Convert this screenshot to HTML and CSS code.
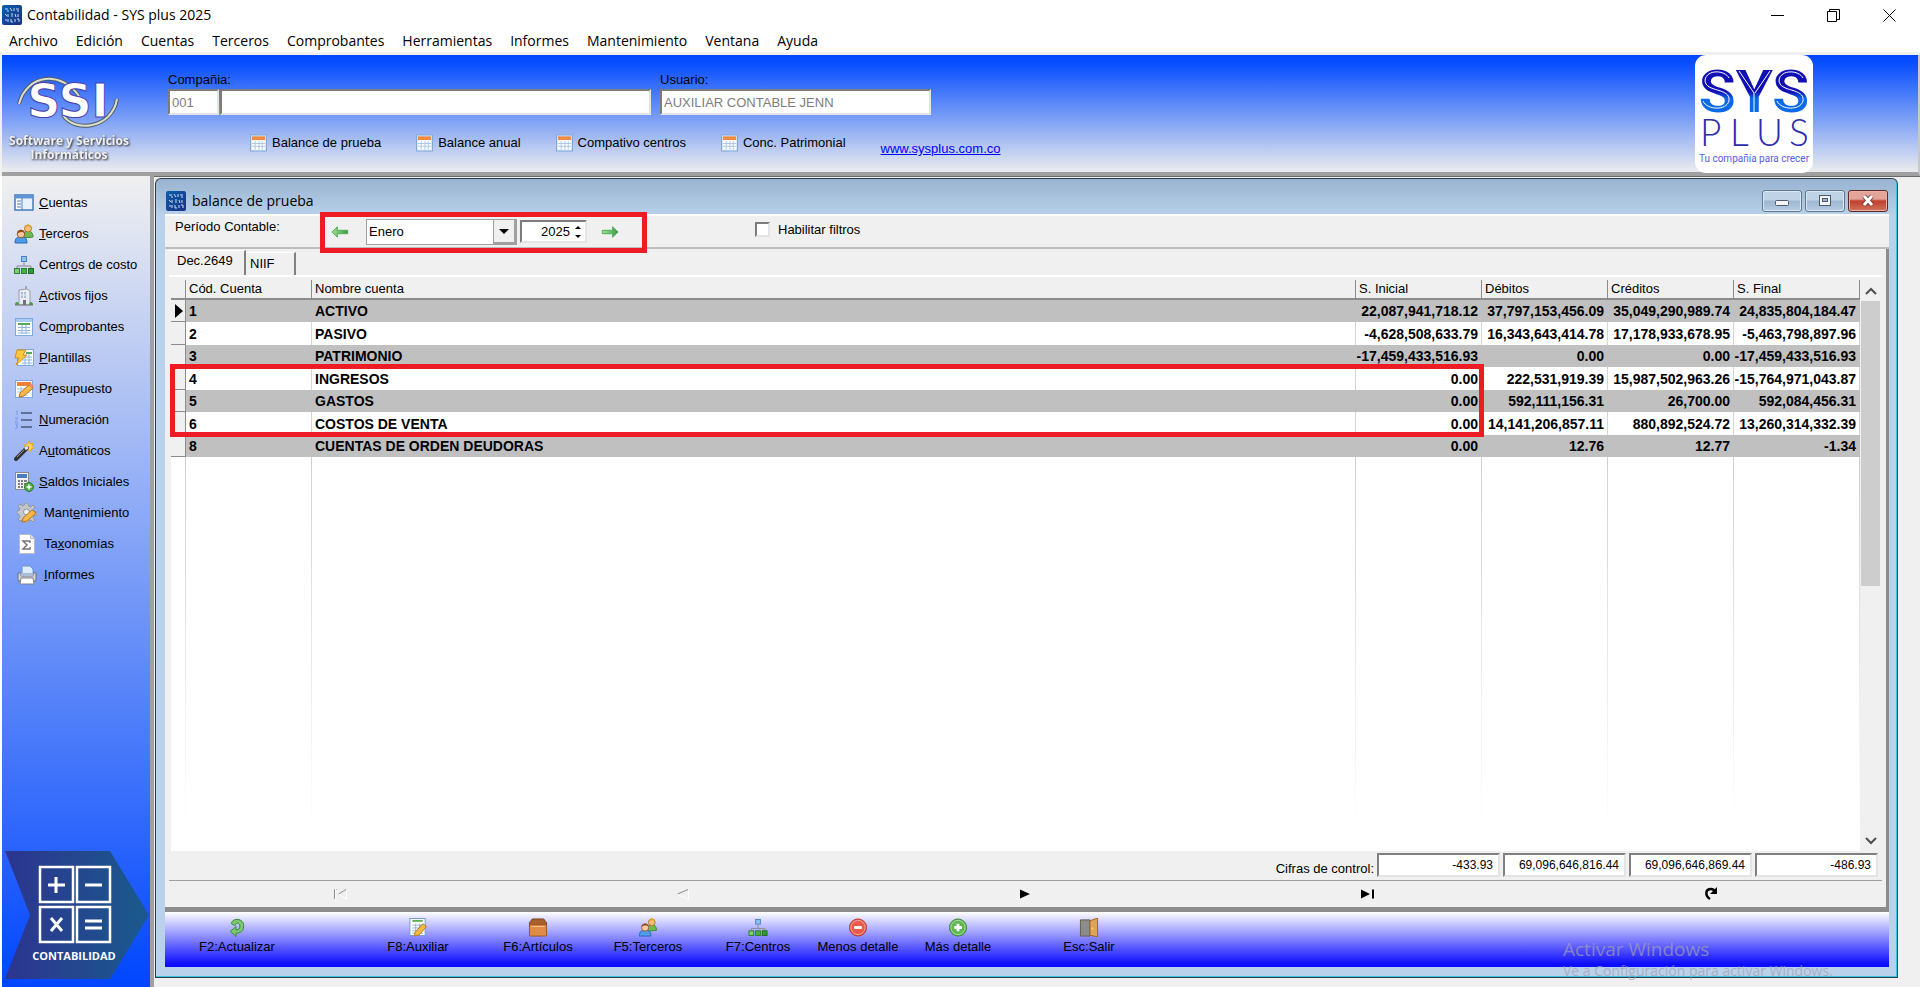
FILE: index.html
```html
<!DOCTYPE html>
<html lang="es">
<head>
  <meta charset="UTF-8">
  <meta name="viewport" content="width=device-width, initial-scale=1.0">
  <title>Contabilidad - SYS plus 2025</title>
  <link rel="stylesheet" href="styles.css">
</head>
<body>
  <!-- iconos -->
  <svg class="sprite" aria-hidden="true">
    <defs>
      <linearGradient id="gApp" x1="0" y1="0" x2="1" y2="1">
        <stop offset="0" stop-color="#0a5fa8"/><stop offset="1" stop-color="#1c2f86"/>
      </linearGradient>
      <linearGradient id="gGreen" x1="0" y1="0" x2="1" y2="0">
        <stop offset="0" stop-color="#9be08f"/><stop offset="1" stop-color="#3c9a42"/>
      </linearGradient>
      <linearGradient id="gBadge" x1="0" y1="0" x2="1" y2="0">
        <stop offset="0" stop-color="#2d3490"/><stop offset="1" stop-color="#1a5a8c"/>
      </linearGradient>
      <linearGradient id="gSys" x1="0" y1="0" x2="0" y2="1">
        <stop offset="0.5" stop-color="#1010b4"/><stop offset="0.6" stop-color="#0a6ae6"/>
      </linearGradient>
    </defs>
    <symbol id="i-app" viewBox="0 0 20 20">
      <rect width="20" height="20" rx="2" fill="url(#gApp)"/>
      <path d="M3 4h3M5 6h2M8 3l2 3M12 3v3M14 4h3M15 6h2M3 9l2 2M6 9v3M9 9h2M9 11h2M13 9l1 3M16 9v3M3 15h2M6 14v3M9 14v3h2M13 14v3M15 14h2v3" stroke="#c6dcf4" stroke-width="1" fill="none"/>
    </symbol>
    <symbol id="i-cal" viewBox="0 0 18 18">
      <rect x="0.5" y="0.5" width="17" height="17" fill="#d5e6f8" stroke="#7fa6d6"/>
      <rect x="2" y="2" width="14" height="4" fill="#f28a42"/>
      <rect x="2" y="6" width="14" height="10" fill="#fff"/>
      <path d="M2 9.500h14M2 12.500h14M5.500 7v9M9.500 7v9M13 7v9" stroke="#a9c4e6" stroke-width="1"/>
    </symbol>
    <symbol id="i-panel" viewBox="0 0 20 20">
      <rect x="1" y="2" width="18" height="15" fill="#fff" stroke="#3f78bd" stroke-width="1.500"/>
      <path d="M1 4h18" stroke="#5a93d6" stroke-width="3"/>
      <path d="M8 5v12" stroke="#3f78bd"/>
      <path d="M3 8h4M3 11h4M3 14h4" stroke="#4d7fbf"/>
      <path d="M9 6h9v10H9z" fill="#e6f1fc"/>
    </symbol>
    <symbol id="i-users" viewBox="0 0 20 20">
      <path d="M9 14c0-5 2-7 5-7s5 2 5 6z" fill="#6fb94f" stroke="#3f8a30"/>
      <circle cx="14" cy="4.500" r="3.500" fill="#f2c078" stroke="#b37a28"/>
      <path d="M10.500 3.500c1-4 6-4 7-.5-2-1-4-1-7 .5z" fill="#e0a020"/>
      <path d="M1 19c0-5 2-6 6-6s6 1 6 6z" fill="#4e9bea" stroke="#2867b0"/>
      <circle cx="7" cy="10" r="3.800" fill="#f4c8a0" stroke="#9a5a2a"/>
      <path d="M3.200 9.500c0-5 7.500-5 7.600 0-2-2-5-2-7.600 0z" fill="#9a4a1c"/>
    </symbol>
    <symbol id="i-tree" viewBox="0 0 20 20">
      <rect x="7.500" y="1.500" width="5" height="5" fill="#8fc0f4" stroke="#4a84c6"/>
      <path d="M10 7v4M3 13v-2h14v2" stroke="#8a8a8a" fill="none"/>
      <rect x="0.500" y="13.500" width="5" height="5" fill="#7fd06a" stroke="#2d8030"/>
      <rect x="7.500" y="13.500" width="5" height="5" fill="#48b048" stroke="#2d8030"/>
      <rect x="14.500" y="13.500" width="5" height="5" fill="#2f9a38" stroke="#1f6a24"/>
    </symbol>
    <symbol id="i-building" viewBox="0 0 20 20">
      <path d="M12 0v4" stroke="#777"/>
      <path d="M5 4l8-1 3 2v14H5z" fill="#e9ecf1" stroke="#9a9fa8"/>
      <path d="M7 6h5v6H7z" fill="#a9bcd8"/>
      <path d="M9.500 6v6M7 9h5M14 7v7" stroke="#e9ecf1"/>
      <path d="M9 14h3v5H9z" fill="#6b7280"/>
      <path d="M1 19c0-4 4-4 4 0zM15 19c0-4 4-4 4 0z" fill="#4d9a46"/>
      <path d="M1 19h18" stroke="#7a7a7a"/>
    </symbol>
    <symbol id="i-sheet" viewBox="0 0 20 20">
      <rect x="1.500" y="1.500" width="17" height="17" fill="#fff" stroke="#7fa9dc"/>
      <path d="M2 3.500h16" stroke="#a9cdf2" stroke-width="3"/>
      <path d="M4 7h12" stroke="#58a85c" stroke-width="2"/>
      <path d="M4 10.500h12M4 13.500h12M4 16h12M8 8v9M12 8v9" stroke="#8fb4de"/>
    </symbol>
    <symbol id="i-bolt" viewBox="0 0 20 20">
      <rect x="3.500" y="1.500" width="16" height="16" fill="#fff" stroke="#7fa9dc"/>
      <path d="M12 5h6" stroke="#58a85c" stroke-width="2"/>
      <path d="M8 9h10M8 12h10M8 15h10M11 8v9M15 6v11" stroke="#8fb4de"/>
      <path d="M3 2h9l-3 5h4L2 17l3-7H1z" fill="#fbc640" stroke="#d18f1c"/>
    </symbol>
    <symbol id="i-budget" viewBox="0 0 20 20">
      <rect x="1.500" y="1.500" width="17" height="17" fill="#fff" stroke="#7fa9dc"/>
      <rect x="3" y="3" width="14" height="4" fill="#f08038"/>
      <path d="M3 10h13M3 13h13M7 8v9M12 8v9" stroke="#9fc0e6"/>
      <path d="M5 18l1-4 9-8 4 3-9 8z" fill="#f8b848" stroke="#b8741c"/>
      <path d="M15 6l4 3 1-2-3-3z" fill="#ec8a7a"/>
    </symbol>
    <symbol id="i-list" viewBox="0 0 20 20">
      <path d="M7 3h11M7 10h11M7 17h11" stroke="#4a5a78" stroke-width="1.500"/>
      <path d="M2 2l1-1v4M1 8h3l-3 4h3M1 14h3l-2 2 2 1-3 2" stroke="#7d9be8" fill="none"/>
    </symbol>
    <symbol id="i-wand" viewBox="0 0 20 20">
      <path d="M15 0l1 3 3-1-1 3 2 2-3 1v3l-3-2-3 1 1-3-2-3 3 0z" fill="#fcd45a" stroke="#e6a82a"/>
      <path d="M2 18L13 7" stroke="#333" stroke-width="4" stroke-linecap="round"/>
      <path d="M11 8l3-2" stroke="#e4e4e4" stroke-width="3"/>
      <path d="M3 16l7-7" stroke="#999"/>
    </symbol>
    <symbol id="i-calc" viewBox="0 0 20 20">
      <rect x="1.500" y="0.500" width="13" height="17" fill="#f0f0ee" stroke="#8a8a8a"/>
      <rect x="3" y="2" width="10" height="4" fill="#4d7cc0"/>
      <path d="M4 9h2M7 9h2M10 9h3M4 12h2M7 12h2M10 12h2M4 15h2M7 15h2" stroke="#7d7d86" stroke-width="2"/>
      <circle cx="15" cy="15" r="4.500" fill="#4fae48" stroke="#2f7d2e"/>
      <path d="M12.500 15h5M15 12.500v5" stroke="#fff" stroke-width="1.500"/>
    </symbol>
    <symbol id="i-gear" viewBox="0 0 20 20">
      <path d="M8 0h3l.5 3 2 1 2.500-2 2 2-2 2.500 1 2 3 .5v3l-3 .5-1 2 2 2.500-2 2-2.500-2-2 1-.5 2H8l-.5-2-2-1L3 18l-2-2 2-2.500-1-2L0 11V8l2-.5 1-2L1 3l2-2 2.500 2 2-1z" fill="#c3c6cc" stroke="#8f939b"/>
      <circle cx="9.500" cy="9" r="3" fill="#eef1f8" stroke="#8f939b"/>
      <path d="M5 19l1-4 9-8 4 3-9 8z" fill="#f8b848" stroke="#b8741c"/>
    </symbol>
    <symbol id="i-sigma" viewBox="0 0 20 20">
      <path d="M2.500 0.500h11l4 4v15h-15z" fill="#fff" stroke="#b5bccb"/>
      <path d="M13.500 0.500v4h4" fill="#dde3ee" stroke="#b5bccb"/>
      <path d="M13 9V7H6l4 4-4 4h7v-2" fill="none" stroke="#777" stroke-width="1.500"/>
    </symbol>
    <symbol id="i-printer" viewBox="0 0 20 20">
      <path d="M5 9V1h8l3 3v5z" fill="#dcecfb" stroke="#6b94c6"/>
      <path d="M1 8h3v3h12V8h3v8H1z" fill="#d2d4d8" stroke="#6f737b"/>
      <path d="M4 8h12v3H4z" fill="#a9bdd6"/>
      <path d="M4 13h12l1 6H3z" fill="#fff" stroke="#7d828a"/>
    </symbol>
    <symbol id="i-left" viewBox="0 0 20 14">
      <path d="M0.500 7L7 1v4h12v4H7v4z" fill="url(#gGreen)" stroke="#4aa850"/>
    </symbol>
    <symbol id="i-right" viewBox="0 0 20 14">
      <path d="M19.500 7L13 1v4H1v4h12v4z" fill="url(#gGreen)" stroke="#4aa850"/>
    </symbol>
    <symbol id="i-refresh" viewBox="0 0 20 20">
      <path d="M4 6C5-1 18 0 17 9c0 5-4 7-8 7v3.500L3 14l6-5v3.500c3 0 4-1 4-4C13 5 9 4 8 8z" fill="#7cc870" stroke="#348a34"/>
    </symbol>
    <symbol id="i-edit" viewBox="0 0 20 20">
      <rect x="1.500" y="0.500" width="16" height="18" fill="#fff" stroke="#6e9bd4"/>
      <path d="M4 3h11" stroke="#5cb050" stroke-width="2"/>
      <path d="M4 7.500h11M4 10.500h11M4 13.500h11M4 16h11M7.500 6v11M11.500 6v11" stroke="#8fb4de"/>
      <path d="M6 19l1-4 8-9 4 3-8 9z" fill="#f8b848" stroke="#b8741c"/>
    </symbol>
    <symbol id="i-box" viewBox="0 0 20 20">
      <path d="M1 5l3-4h12l3 4v3H1z" fill="#a8602c" stroke="#7c4218"/>
      <rect x="1" y="7" width="18" height="12" rx="1" fill="#e08a48" stroke="#9a5420"/>
      <path d="M3 9h14" stroke="#f6c08c"/>
    </symbol>
    <symbol id="i-minus" viewBox="0 0 20 20">
      <circle cx="10" cy="10" r="9" fill="#ea5a4c" stroke="#b83228"/>
      <circle cx="10" cy="10" r="7.500" fill="none" stroke="#f6a79c"/>
      <path d="M6 10h8" stroke="#fff" stroke-width="3"/>
    </symbol>
    <symbol id="i-plus" viewBox="0 0 20 20">
      <circle cx="10" cy="10" r="9" fill="#5fb653" stroke="#36852f"/>
      <circle cx="10" cy="10" r="7.500" fill="none" stroke="#aadf9e"/>
      <path d="M6 10h8M10 6v8" stroke="#fff" stroke-width="3"/>
    </symbol>
    <symbol id="i-door" viewBox="0 0 20 20">
      <path d="M1 19V2h10v17z" fill="#8c8c8c" stroke="#6a5a48"/>
      <path d="M11 3l8-3v20l-8-2z" fill="#e0a458" stroke="#9c6420"/>
      <circle cx="13.500" cy="11" r="1" fill="#ffd94a"/>
    </symbol>
  </svg>

  <header class="titlebar">
    <svg class="app-icon"><use href="#i-app"/></svg>
    <h1 class="app-title">Contabilidad - SYS plus 2025</h1>
    <div class="win-controls">
      <button class="win-btn" aria-label="Minimizar"><svg width="13" height="13"><path d="M0 6.500h13" stroke="#000"/></svg></button>
      <button class="win-btn" aria-label="Restaurar"><svg width="13" height="13"><path d="M0.500 2.500h9v10h-9zM2.500 2.500v-2h10v10h-3" fill="none" stroke="#000"/></svg></button>
      <button class="win-btn" aria-label="Cerrar"><svg width="13" height="13"><path d="M0.500 0.500l12 12M12.500 0.500l-12 12" stroke="#000"/></svg></button>
    </div>
  </header>

  <nav class="menubar">
    <button class="menu-item">Archivo</button>
    <button class="menu-item">Edición</button>
    <button class="menu-item">Cuentas</button>
    <button class="menu-item">Terceros</button>
    <button class="menu-item">Comprobantes</button>
    <button class="menu-item">Herramientas</button>
    <button class="menu-item">Informes</button>
    <button class="menu-item">Mantenimiento</button>
    <button class="menu-item">Ventana</button>
    <button class="menu-item">Ayuda</button>
  </nav>

  <div class="banner">
    <svg class="ssi-logo" viewBox="0 0 150 117">
      <g fill="none" stroke="#4c5a6a" stroke-width="4">
        <path d="M17 49C25 18 60 16 77 41"/><path d="M115 44C110 74 72 78 61 60"/>
      </g>
      <g fill="none" stroke="#d9dfc8" stroke-width="2">
        <path d="M17 49C25 18 60 16 77 41"/><path d="M115 44C110 74 72 78 61 60"/>
      </g>
      <text class="ssi-word" x="66" y="62" text-anchor="middle">SSI</text>
      <text class="ssi-caption" x="67" y="90" text-anchor="middle">Software y Servicios</text>
      <text class="ssi-caption" x="67" y="104" text-anchor="middle">Informáticos</text>
    </svg>
    <div class="banner-main">
      <div class="fields">
        <div class="field">
          <label for="companyCode">Compañia:</label>
          <div class="field-pair">
            <input id="companyCode" class="box box-code" type="text" value="001" readonly>
            <input class="box box-name" type="text" value="" aria-label="Nombre de la compañía" readonly>
          </div>
        </div>
        <div class="field">
          <label for="userName">Usuario:</label>
          <input id="userName" class="box box-user" type="text" value="AUXILIAR CONTABLE JENN" readonly>
        </div>
      </div>
      <div class="shortcuts">
        <button class="shortcut"><svg><use href="#i-cal"/></svg>Balance de prueba</button>
        <button class="shortcut"><svg><use href="#i-cal"/></svg>Balance anual</button>
        <button class="shortcut"><svg><use href="#i-cal"/></svg>Compativo centros</button>
        <button class="shortcut"><svg><use href="#i-cal"/></svg>Conc. Patrimonial</button>
        <a class="site-link" href="#">www.sysplus.com.co</a>
      </div>
    </div>
    <svg class="sys-logo" viewBox="0 0 118 118">
      <rect width="118" height="118" rx="11" fill="#fff"/>
      <text class="sys-word" x="59" y="57" text-anchor="middle">SYS</text>
      <!-- vetas blancas de las letras -->
      <g fill="none" stroke="#fff" stroke-width="1">
        <path d="M34 23C30 15 12 14 10 25C10 38 36 32 34 46C31 56 12 55 8 46"/>
        <path d="M44 16L59 38V57M75 16L60 38"/>
        <path d="M108 23C104 15 86 14 84 25C84 38 110 32 108 46C105 56 86 55 82 46"/>
      </g>
      <text class="plus-word" x="5" y="91">P</text>
      <text class="plus-word" x="35" y="91">L</text>
      <text class="plus-word" x="61" y="91">U</text>
      <text class="plus-word" x="94" y="91">S</text>
      <text class="sys-caption" x="59" y="107" text-anchor="middle">Tu compañía para crecer</text>
    </svg>
  </div>

  <div class="workspace">
    <aside class="sidebar">
      <button class="side-item"><svg><use href="#i-panel"/></svg><span><u>C</u>uentas</span></button>
      <button class="side-item"><svg><use href="#i-users"/></svg><span><u>T</u>erceros</span></button>
      <button class="side-item"><svg><use href="#i-tree"/></svg><span>Centr<u>o</u>s de costo</span></button>
      <button class="side-item"><svg><use href="#i-building"/></svg><span><u>A</u>ctivos fijos</span></button>
      <button class="side-item"><svg><use href="#i-sheet"/></svg><span>Co<u>m</u>probantes</span></button>
      <button class="side-item"><svg><use href="#i-bolt"/></svg><span><u>P</u>lantillas</span></button>
      <button class="side-item"><svg><use href="#i-budget"/></svg><span>P<u>r</u>esupuesto</span></button>
      <button class="side-item"><svg><use href="#i-list"/></svg><span><u>N</u>umeración</span></button>
      <button class="side-item"><svg><use href="#i-wand"/></svg><span>A<u>u</u>tomáticos</span></button>
      <button class="side-item"><svg><use href="#i-calc"/></svg><span><u>S</u>aldos Iniciales</span></button>
      <button class="side-item side-wide"><svg><use href="#i-gear"/></svg><span>Mant<u>e</u>nimiento</span></button>
      <button class="side-item side-wide"><svg><use href="#i-sigma"/></svg><span>Ta<u>x</u>onomías</span></button>
      <button class="side-item side-wide"><svg><use href="#i-printer"/></svg><span><u>I</u>nformes</span></button>
      <svg class="badge" viewBox="0 0 144 128">
        <path d="M0 0H105L144 64L105 128H0L25 64Z" fill="url(#gBadge)"/>
        <g fill="none" stroke="#fff" stroke-width="2.500">
          <rect x="35" y="16" width="33" height="35"/><rect x="72" y="16" width="33" height="35"/>
          <rect x="35" y="56" width="33" height="35"/><rect x="72" y="56" width="33" height="35"/>
        </g>
        <path d="M43 34h17M51 26v16M80 34h17M46 67l11 13M57 67l-11 13M80 70h17M80 77h17" stroke="#fff" stroke-width="3"/>
        <text class="badge-text" x="69" y="109" text-anchor="middle">CONTABILIDAD</text>
      </svg>
    </aside>

    <main class="mdi">
      <section class="child">
        <div class="child-title">
          <svg class="child-icon"><use href="#i-app"/></svg>
          <h2>balance de prueba</h2>
          <div class="child-controls">
            <button class="cap-btn" aria-label="Minimizar"><svg width="16" height="14"><rect x="1.500" y="6.500" width="13" height="5" rx="1" fill="#f4f4f4" stroke="#4c5b6d"/></svg></button>
            <button class="cap-btn" aria-label="Maximizar"><svg width="16" height="14"><rect x="2.500" y="1.500" width="11" height="10" fill="#f4f4f4" stroke="#4c5b6d"/><rect x="5.500" y="4.500" width="5" height="3" fill="#9db4cc" stroke="#4c5b6d"/></svg></button>
            <button class="cap-btn cap-close" aria-label="Cerrar"><svg width="16" height="14"><path d="M4 2l8 9M12 2l-8 9" stroke="#5c3030" stroke-width="4.500"/><path d="M4 2l8 9M12 2l-8 9" stroke="#fff" stroke-width="3"/></svg></button>
          </div>
        </div>

        <div class="child-body">
          <div class="toolbar">
            <span class="toolbar-label">Período Contable:</span>
            <div class="period">
              <button class="arrow-btn" aria-label="Mes anterior"><svg width="18" height="12"><use href="#i-left"/></svg></button>
              <div class="combo">
                <select class="combo-select" aria-label="Mes">
                  <option>Enero</option>
                  <option>Febrero</option>
                  <option>Marzo</option>
                </select>
                <span class="combo-arrow"></span>
              </div>
              <div class="spin">
                <input class="spin-input" type="number" value="2025" aria-label="Año">
                <span class="spin-arrows"><i class="tri-up"></i><i class="tri-down"></i></span>
              </div>
              <button class="arrow-btn" aria-label="Mes siguiente"><svg width="18" height="12"><use href="#i-right"/></svg></button>
              <div class="mark mark-period"></div>
            </div>
            <label class="filter"><input class="check" type="checkbox">Habilitar filtros</label>
          </div>

          <div class="sheet">
            <div class="tabs" role="tablist">
              <button class="tab tab-active" role="tab" aria-selected="true">Dec.2649</button>
              <button class="tab" role="tab" aria-selected="false">NIIF</button>
            </div>

            <div class="grid-wrap">
              <table class="grid">
                <colgroup>
                  <col class="col-ind"><col class="col-code"><col>
                  <col class="col-num"><col class="col-num"><col class="col-num"><col class="col-num">
                </colgroup>
                <thead>
                  <tr><th></th><th>Cód. Cuenta</th><th>Nombre cuenta</th><th>S. Inicial</th><th>Débitos</th><th>Créditos</th><th>S. Final</th></tr>
                </thead>
                <tbody>
                  <tr><td class="ind"><i class="current"></i></td><td>1</td><td>ACTIVO</td><td class="num">22,087,941,718.12</td><td class="num">37,797,153,456.09</td><td class="num">35,049,290,989.74</td><td class="num">24,835,804,184.47</td></tr>
                  <tr><td class="ind"></td><td>2</td><td>PASIVO</td><td class="num">-4,628,508,633.79</td><td class="num">16,343,643,414.78</td><td class="num">17,178,933,678.95</td><td class="num">-5,463,798,897.96</td></tr>
                  <tr><td class="ind"></td><td>3</td><td>PATRIMONIO</td><td class="num">-17,459,433,516.93</td><td class="num">0.00</td><td class="num">0.00</td><td class="num">-17,459,433,516.93</td></tr>
                  <tr><td class="ind"></td><td>4</td><td>INGRESOS</td><td class="num">0.00</td><td class="num">222,531,919.39</td><td class="num">15,987,502,963.26</td><td class="num">-15,764,971,043.87</td></tr>
                  <tr><td class="ind"></td><td>5</td><td>GASTOS</td><td class="num">0.00</td><td class="num">592,111,156.31</td><td class="num">26,700.00</td><td class="num">592,084,456.31</td></tr>
                  <tr><td class="ind"></td><td>6</td><td>COSTOS DE VENTA</td><td class="num">0.00</td><td class="num">14,141,206,857.11</td><td class="num">880,892,524.72</td><td class="num">13,260,314,332.39</td></tr>
                  <tr><td class="ind"></td><td>8</td><td>CUENTAS DE ORDEN DEUDORAS</td><td class="num">0.00</td><td class="num">12.76</td><td class="num">12.77</td><td class="num">-1.34</td></tr>
                  <tr class="filler"><td></td><td></td><td></td><td></td><td></td><td></td><td></td></tr>
                </tbody>
              </table>
              <div class="scrollbar">
                <svg width="12" height="9"><path d="M1 7l5-5 5 5" fill="none" stroke="#505050" stroke-width="2"/></svg>
                <div class="thumb"></div>
                <svg width="12" height="9"><path d="M1 2l5 5 5-5" fill="none" stroke="#505050" stroke-width="2"/></svg>
              </div>
              <div class="mark mark-rows"></div>
            </div>

            <div class="totals">
              <label for="ctl1">Cifras de control:</label>
              <input id="ctl1" class="total" type="text" value="-433.93" readonly>
              <input class="total" type="text" value="69,096,646,816.44" aria-label="Débitos" readonly>
              <input class="total" type="text" value="69,096,646,869.44" aria-label="Créditos" readonly>
              <input class="total" type="text" value="-486.93" aria-label="Saldo final" readonly>
            </div>

            <div class="navigator">
              <button class="nav-btn" aria-label="Primero" disabled><svg width="16" height="12"><path d="M2.500 11V1.500h2M14 1.500L6.500 6" stroke="#8c8c8c" fill="none"/><path d="M3.500 1v10.500M7 6.500l7.500 4.500V2" stroke="#fff" fill="none"/></svg></button>
              <button class="nav-btn" aria-label="Anterior" disabled><svg width="14" height="12"><path d="M12 1.500L1.500 6" stroke="#8c8c8c" fill="none"/><path d="M1.500 6.500l11 5V1.500" stroke="#fff" fill="none"/></svg></button>
              <button class="nav-btn" aria-label="Siguiente"><svg width="11" height="10"><path d="M0 0.500v9L10 5z"/></svg></button>
              <button class="nav-btn" aria-label="Último"><svg width="14" height="10"><path d="M0 0.500v9L9 5zM11 0.500h2v9h-2z"/></svg></button>
              <button class="nav-btn" aria-label="Refrescar"><svg width="14" height="14"><path d="M6 12C1 9 1 2 7 2c2 0 3 1 4 2" fill="none" stroke="#000" stroke-width="2.500"/><path d="M13 0v7H6z"/></svg></button>
            </div>
          </div>

          <div class="footer">
            <button class="foot-btn foot-refresh"><svg><use href="#i-refresh"/></svg>F2:Actualizar</button>
            <button class="foot-btn foot-aux"><svg><use href="#i-edit"/></svg>F8:Auxiliar</button>
            <button class="foot-btn"><svg><use href="#i-box"/></svg>F6:Artículos</button>
            <button class="foot-btn"><svg><use href="#i-users"/></svg>F5:Terceros</button>
            <button class="foot-btn"><svg><use href="#i-tree"/></svg>F7:Centros</button>
            <button class="foot-btn foot-less"><svg><use href="#i-minus"/></svg>Menos detalle</button>
            <button class="foot-btn"><svg><use href="#i-plus"/></svg>Más detalle</button>
            <button class="foot-btn foot-exit"><svg><use href="#i-door"/></svg>Esc:Salir</button>
          </div>
        </div>
      </section>
    </main>
  </div>

  <div class="watermark">
    <p class="wm-title">Activar Windows</p>
    <p class="wm-text">Ve a Configuración para activar Windows.</p>
  </div>
</body>
</html>
```
FILE: styles.css
```css
* {
  box-sizing: border-box;
}
body {
  margin: 0;
  height: 100vh;
  display: flex;
  flex-direction: column;
  overflow: hidden;
  position: relative;
  background-color: #f0f0f0;
  font-family: "Liberation Sans", Arial, sans-serif;
  font-size: 13px;
  line-height: 16px;
  color: #000;
}
button, input, select {
  font: inherit;
  color: inherit;
}
button {
  background: none;
  border: none;
  padding: 0;
  white-space: nowrap;
}
h1, h2, p {
  margin: 0;
  font-weight: normal;
}
.sprite {
  position: absolute;
  width: 0;
  height: 0;
}

/* barra de titulo y menu */
.titlebar {
  display: flex;
  align-items: center;
  height: 30px;
  padding-left: 2px;
  background-color: #fff;
  font-family: "Open Sans", "Noto Sans", sans-serif;
}
.app-icon {
  width: 20px;
  height: 20px;
  margin-right: 5px;
}
.app-title {
  font-size: 14px;
}
.win-controls {
  display: flex;
  margin-left: auto;
  padding-right: 3px;
}
.win-btn {
  display: flex;
  align-items: center;
  justify-content: center;
  width: 56px;
  height: 28px;
}
.menubar {
  display: flex;
  gap: 18px;
  height: 25px;
  padding: 0 9px;
  background-color: #fff;
  border-bottom: 3px solid #f0f0f0;
  font-family: "Open Sans", "Noto Sans", sans-serif;
  font-size: 14px;
}

/* cabecera */
.banner {
  display: flex;
  height: 121px;
  margin-left: 2px;
  background: linear-gradient(#0046ff, #0a50ff 8%, #e6e9ee 98%);
  border-bottom: 4px solid #a0a0a0;
  border-right: 2px solid #c8c8c8;
}
.ssi-logo {
  width: 150px;
  height: 117px;
}
.ssi-word {
  font: bold 46px "DejaVu Sans", sans-serif;
  fill: #fff;
  stroke: #4a3fb0;
  stroke-width: 1px;
}
.ssi-caption {
  font: bold 12px "Open Sans", sans-serif;
  fill: #f0f0f0;
  filter: drop-shadow(1px 1px 1px #222);
}
.banner-main {
  flex: 1;
  padding: 17px 0 0 16px;
}
.fields {
  display: flex;
  gap: 9px;
}
.field {
  display: flex;
  flex-direction: column;
  gap: 1px;
}
.field-pair {
  display: flex;
  gap: 1px;
}
.box {
  height: 26px;
  padding: 0 2px;
  background-color: #fff;
  border: 2px solid;
  border-color: #7c7c7c #e4e4e4 #e4e4e4 #7c7c7c;
  color: #7d7d7d;
}
.box-code {
  width: 51px;
}
.box-name {
  width: 431px;
}
.box-user {
  width: 271px;
}
.shortcuts {
  display: flex;
  gap: 35px;
  padding: 19px 0 0 82px;
}
.shortcut {
  display: flex;
  align-items: center;
  gap: 5px;
  height: 18px;
}
.shortcut svg {
  width: 17px;
  height: 18px;
}
.site-link {
  margin-top: 7px;
  color: #0000ff;
}
.sys-logo {
  width: 118px;
  height: 118px;
  margin-right: 105px;
}
.sys-word {
  font: bold 60px Roboto, sans-serif;
  fill: url(#gSys);
}
.plus-word {
  font: 300 37px Lato, sans-serif;
  fill: #2c2cae;
}
.sys-caption {
  font: 10px Roboto, sans-serif;
  fill: #5a5af0;
}

/* menu lateral */
.workspace {
  display: flex;
  flex: 1;
  min-height: 0;
}
.sidebar {
  display: flex;
  flex-direction: column;
  width: 154px;
  padding-top: 11px;
  border-left: 2px solid #fff;
  border-right: 4px solid #a0a0a0;
  background: linear-gradient(#f0f0f0, #0046ff);
}
.side-item {
  display: flex;
  align-items: center;
  gap: 5px;
  height: 31px;
  padding-left: 12px;
}
.side-item svg {
  width: 20px;
  height: 20px;
}
.side-wide {
  gap: 7px;
  padding-left: 15px;
}
.badge {
  width: 144px;
  height: 128px;
  margin: auto 0 8px 3px;
}
.badge-text {
  font: bold 11px "Open Sans", sans-serif;
  fill: #fff;
}

/* ventana hija */
.mdi {
  flex: 1;
  display: flex;
  min-width: 0;
  padding: 1px 22px 9px 1px;
  border-top: 1px solid #696969;
}
.child {
  flex: 1;
  display: flex;
  flex-direction: column;
  min-width: 0;
  padding: 0 8px 10px 9px;
  border: 1px solid #303c48;
  border-right-color: #1d5c66;
  box-shadow: inset -1px -1px 0 #34c6de;
  border-radius: 6px 6px 0 0;
  background: linear-gradient(#99b4d1, #b9d1ea 37px);
}
.child-title {
  display: flex;
  align-items: center;
  height: 35px;
  padding: 8px 1px 0 1px;
  font-family: "Open Sans", "Noto Sans", sans-serif;
}
.child-icon {
  width: 20px;
  height: 20px;
  margin-right: 6px;
}
.child-title h2 {
  font-size: 14px;
}
.child-controls {
  display: flex;
  gap: 3px;
  margin-left: auto;
}
.cap-btn {
  display: flex;
  align-items: center;
  justify-content: center;
  width: 40px;
  height: 22px;
  border: 1px solid #63768c;
  border-radius: 3px;
  box-shadow: inset 0 0 0 1px #dce8f4;
  background: linear-gradient(#c0d2e5 45%, #9db6d1 50%, #b6cce3);
}
.cap-close {
  border-color: #5f2a26;
  box-shadow: inset 0 0 0 1px #e8b0a6;
  background: linear-gradient(#e3a59a 40%, #bf3f2a 50%, #cf7460);
}
.child-body {
  flex: 1;
  display: flex;
  flex-direction: column;
  min-height: 0;
  background-color: #f0f0f0;
  border-top: 2px solid #fff;
}
.toolbar {
  display: flex;
  height: 33px;
  padding-left: 10px;
  border-bottom: 2px solid #bcbcbc;
}
.toolbar-label {
  width: 145px;
  padding-top: 3px;
}
.period {
  display: flex;
  position: relative;
  width: 327px;
  padding: 3px 0 0 11px;
}
.arrow-btn {
  display: flex;
  align-items: center;
  height: 26px;
}
.combo {
  position: relative;
  width: 151px;
  height: 26px;
  margin-left: 17px;
}
.combo-select {
  appearance: none;
  width: 100%;
  height: 26px;
  padding: 0 2px;
  background-color: #fff;
  border: 1px solid #a0a0a0;
  border-radius: 0;
}
.combo-arrow {
  position: absolute;
  top: 1px;
  right: 0;
  width: 24px;
  height: 24px;
  pointer-events: none;
  background-color: #f0f0f0;
  border: 1px solid #a0a0a0;
  border-width: 0 3px 2px 1px;
}
.combo-arrow::after {
  content: "";
  position: absolute;
  top: 9px;
  left: 5px;
  border: 5px solid transparent;
  border-top-color: #000;
}
.spin {
  display: flex;
  width: 67px;
  height: 23px;
  margin: 1px 14px 0 3px;
  background-color: #fff;
  border: 2px solid;
  border-color: #7c7c7c #e4e4e4 #e4e4e4 #7c7c7c;
}
.spin-input {
  appearance: textfield;
  width: 48px;
  padding: 0;
  border: none;
  background: none;
  text-align: right;
}
.spin-input::-webkit-inner-spin-button {
  display: none;
}
.spin-arrows {
  display: flex;
  flex-direction: column;
  align-items: center;
  justify-content: center;
  gap: 6px;
  width: 15px;
}
.tri-up, .tri-down {
  border: 3px solid transparent;
}
.tri-up {
  border-top: 0;
  border-bottom-color: #000;
}
.tri-down {
  border-bottom: 0;
  border-top-color: #000;
}
.filter {
  display: flex;
  align-items: center;
  gap: 8px;
  height: 27px;
  margin-left: 108px;
}
.check {
  appearance: none;
  width: 15px;
  height: 15px;
  margin: 0;
  background-color: #fff;
  border: 2px solid;
  border-color: #7c7c7c #e4e4e4 #e4e4e4 #7c7c7c;
}

/* recuadros rojos */
.mark {
  position: absolute;
  border: 5px solid #ed1c24;
  pointer-events: none;
}
.mark-period {
  top: -4px;
  right: 0;
  bottom: -6px;
  left: 0;
}
.mark-rows {
  top: 84px;
  left: -1px;
  right: 396px;
  height: 73px;
}

/* hoja con pestañas */
.sheet {
  flex: 1;
  display: flex;
  flex-direction: column;
  min-height: 0;
  padding: 1px 4px 0 4px;
  border-right: 3px solid #8c8c8c;
  border-bottom: 5px solid #8c8c8c;
}
.tabs {
  display: flex;
  align-items: flex-end;
  height: 27px;
  border-bottom: 2px solid #fff;
}
.tab {
  height: 23px;
  width: 50px;
  padding-left: 4px;
  text-align: left;
  border-top: 1px solid #fff;
  border-right: 2px solid #808080;
}
.tab-active {
  height: 25px;
  width: 77px;
  padding: 0 0 4px 8px;
}
.grid-wrap {
  flex: 1;
  display: flex;
  position: relative;
  min-height: 0;
  margin: 3px 2px 0 2px;
}
.grid {
  flex: 1;
  height: 100%;
  table-layout: fixed;
  border-collapse: separate;
  border-spacing: 0;
  background-color: #fff;
}
.col-ind {
  width: 15px;
}
.col-code {
  width: 126px;
}
.col-num {
  width: 126px;
}
.grid th {
  height: 20px;
  padding: 0 3px;
  text-align: left;
  font-weight: normal;
  background-color: #f0f0f0;
  border-right: 1px solid #8c8c8c;
  border-bottom: 2px solid #8c8c8c;
}
.grid td {
  height: 22px;
  padding: 0 3px;
  font-weight: bold;
  font-size: 14px;
  white-space: nowrap;
  border-right: 1px solid #d4d4d4;
}
.grid tr:nth-child(even) td {
  height: 23px;
}
.grid tr:nth-child(odd) td {
  background-color: #c0c0c0;
  border-right-color: #c0c0c0;
}
.grid td.num {
  padding-left: 0;
  text-align: right;
}
.grid tr td.ind {
  padding: 0 0 0 4px;
  background-color: #f0f0f0;
  border-right: 1px solid #8c8c8c;
  border-bottom: 1px solid #8c8c8c;
}
.current {
  display: block;
  width: 8px;
  border: 7px solid transparent;
  border-right: 0;
  border-left: 8px solid #000;
}
.grid tr.filler td {
  height: auto;
  border-right: none;
  background: linear-gradient(#d0d0d0, #fff 95%) right / 1px 100% no-repeat;
}
.scrollbar {
  display: flex;
  flex-direction: column;
  align-items: center;
  width: 20px;
  padding: 7px 0 6px 1px;
}
.thumb {
  width: 100%;
  height: 51%;
  margin: 5px 0 auto 0;
  background-color: #cdcdcd;
}
.totals {
  display: flex;
  justify-content: flex-end;
  gap: 3px;
  height: 30px;
  padding: 2px 4px 0 0;
  border-bottom: 1px solid #a0a0a0;
}
.totals label {
  padding-top: 8px;
}
.total {
  width: 123px;
  height: 24px;
  padding: 0 5px;
  font-size: 12px;
  text-align: right;
  background-color: #fff;
  border: 2px solid;
  border-color: #808080 #e4e4e4 #e4e4e4 #808080;
}
.navigator {
  display: flex;
  height: 26px;
}
.nav-btn {
  flex: 1;
  display: flex;
  align-items: center;
  justify-content: center;
}

/* barra inferior */
.footer {
  display: flex;
  align-items: flex-start;
  height: 55px;
  padding: 6px 0 0 32px;
  background: linear-gradient(#fff, #e0e0ff 12%, #0c0cff 95%);
}
.foot-btn {
  display: flex;
  flex-direction: column;
  align-items: center;
  gap: 2px;
  width: 110px;
}
.foot-btn svg {
  width: 20px;
  height: 19px;
}
.foot-refresh {
  width: 80px;
}
.foot-aux {
  width: 130px;
  margin-left: 76px;
}
.foot-less {
  width: 90px;
}
.foot-exit {
  width: 80px;
  margin-left: 36px;
}

/* aviso de activacion */
.watermark {
  position: absolute;
  right: 83px;
  bottom: 6px;
  width: 274px;
  font-family: "Open Sans", "Noto Sans", sans-serif;
  color: rgba(160, 160, 175, 0.7);
}
.wm-title {
  font-size: 19px;
  line-height: 24px;
}
.wm-text {
  font-size: 14px;
  line-height: 20px;
  white-space: nowrap;
}
```
